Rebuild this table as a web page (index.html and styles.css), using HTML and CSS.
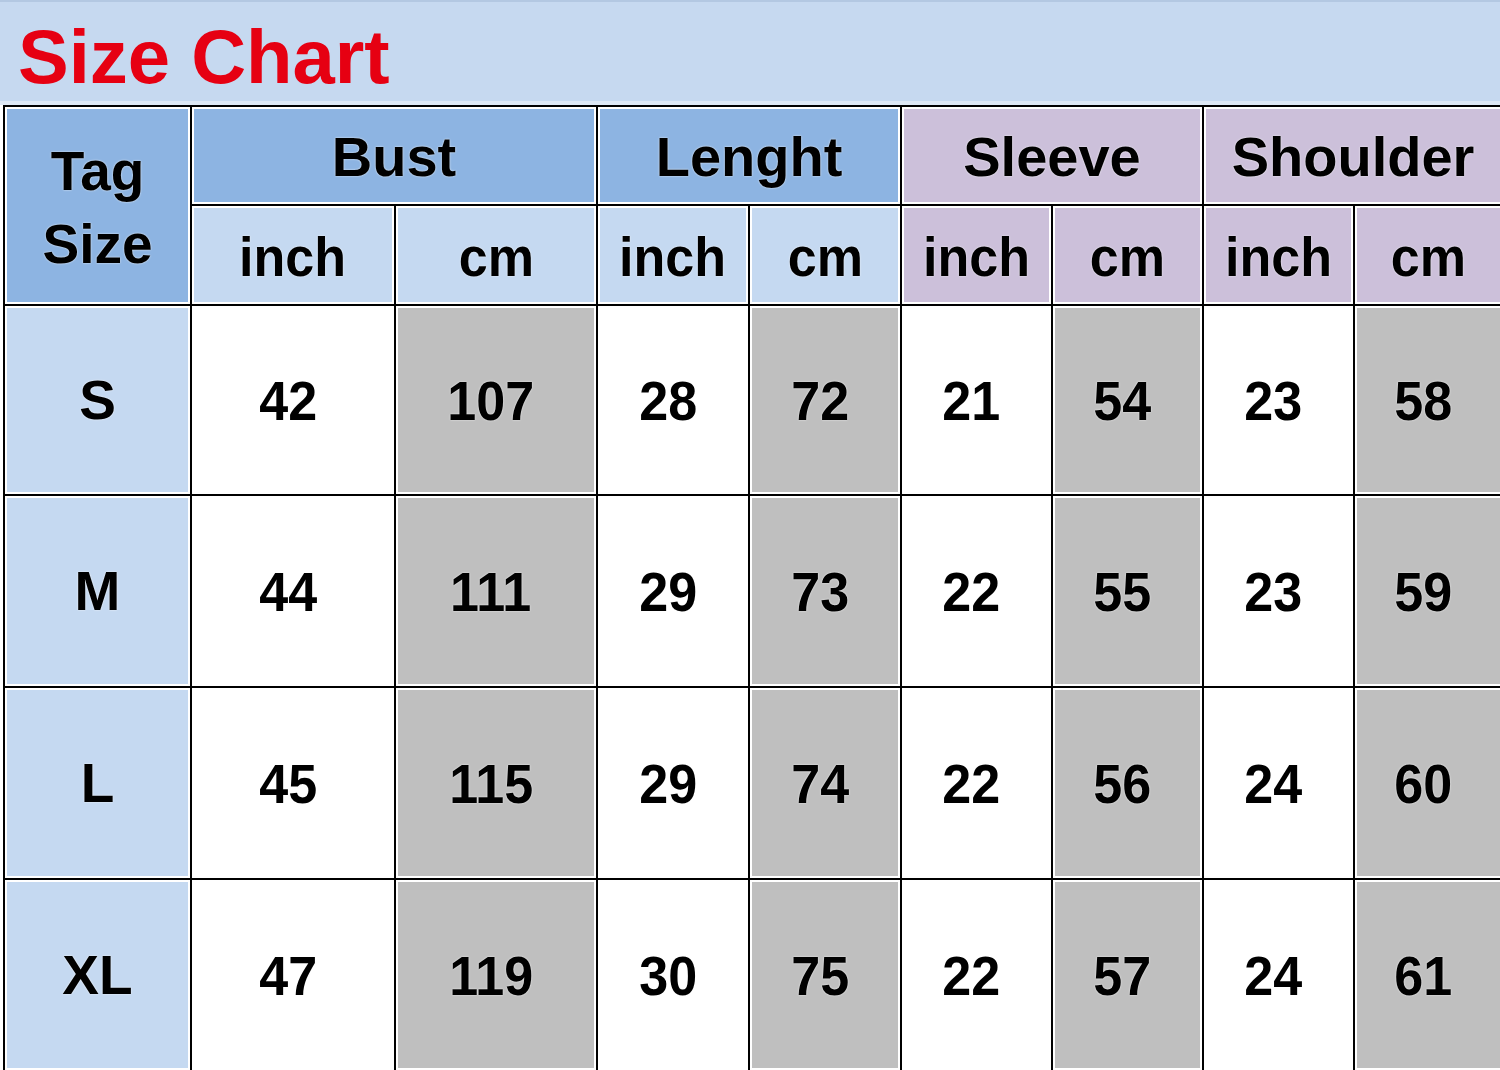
FILE: index.html
```html
<!DOCTYPE html>
<html lang="en">
<head>
<meta charset="utf-8">
<title>Size Chart</title>
<link rel="stylesheet" href="styles.css">
</head>
<body>
<div class="page">
  <header class="band">
    <h1 class="title">Size Chart</h1>
  </header>
  <div class="strip"></div>
  <div class="chart">
    <div class="cell tag-head"><span class="tag-text">Tag<br>Size</span></div>
    <div class="cell group blue span2"><span>Bust</span></div>
    <div class="cell group blue span2"><span>Lenght</span></div>
    <div class="cell group purple span2"><span>Sleeve</span></div>
    <div class="cell group purple span2"><span>Shoulder</span></div>

    <div class="cell sub light"><span>inch</span></div>
    <div class="cell sub light"><span>cm</span></div>
    <div class="cell sub light"><span>inch</span></div>
    <div class="cell sub light"><span>cm</span></div>
    <div class="cell sub lilac"><span>inch</span></div>
    <div class="cell sub lilac"><span>cm</span></div>
    <div class="cell sub lilac"><span>inch</span></div>
    <div class="cell sub lilac"><span>cm</span></div>

    <div class="cell size"><span>S</span></div>
    <div class="cell num white"><span>42</span></div>
    <div class="cell num gray"><span>107</span></div>
    <div class="cell num white"><span>28</span></div>
    <div class="cell num gray"><span>72</span></div>
    <div class="cell num white"><span>21</span></div>
    <div class="cell num gray"><span>54</span></div>
    <div class="cell num white"><span>23</span></div>
    <div class="cell num gray"><span>58</span></div>

    <div class="cell size"><span>M</span></div>
    <div class="cell num white"><span>44</span></div>
    <div class="cell num gray"><span>111</span></div>
    <div class="cell num white"><span>29</span></div>
    <div class="cell num gray"><span>73</span></div>
    <div class="cell num white"><span>22</span></div>
    <div class="cell num gray"><span>55</span></div>
    <div class="cell num white"><span>23</span></div>
    <div class="cell num gray"><span>59</span></div>

    <div class="cell size"><span>L</span></div>
    <div class="cell num white"><span>45</span></div>
    <div class="cell num gray"><span>115</span></div>
    <div class="cell num white"><span>29</span></div>
    <div class="cell num gray"><span>74</span></div>
    <div class="cell num white"><span>22</span></div>
    <div class="cell num gray"><span>56</span></div>
    <div class="cell num white"><span>24</span></div>
    <div class="cell num gray"><span>60</span></div>

    <div class="cell size"><span>XL</span></div>
    <div class="cell num white"><span>47</span></div>
    <div class="cell num gray"><span>119</span></div>
    <div class="cell num white"><span>30</span></div>
    <div class="cell num gray"><span>75</span></div>
    <div class="cell num white"><span>22</span></div>
    <div class="cell num gray"><span>57</span></div>
    <div class="cell num white"><span>24</span></div>
    <div class="cell num gray"><span>61</span></div>
  </div>
</div>
</body>
</html>
```

FILE: styles.css
```css
html, body {
  margin: 0;
  padding: 0;
  background: #ffffff;
  overflow: hidden;
}

.page {
  width: 1500px;
  height: 1070px;
  overflow: hidden;
  font-family: "Liberation Sans", Arial, sans-serif;
  color: #000;
}

.band {
  height: 101px;
  box-sizing: border-box;
  background: #c6d9f0;
  border-top: 2px solid #b3c8e2;
  padding: 17px 0 0 18px;
}

.title {
  margin: 0;
  font-size: 76px;
  line-height: 76px;
  font-weight: 700;
  color: #e60012;
  letter-spacing: 0;
}

.strip {
  height: 4px;
  background: #dde8f5;
}

.chart {
  display: grid;
  grid-template-columns: 185px 202px 200px 150px 150px 149px 149px 149px 147px;
  grid-template-rows: 97px 98px 188px 190px 190px 190px;
  gap: 2px;
  padding: 2px 0 0 2px;
  margin-left: 3px;
  background: #000;
  width: max-content;
}

.cell {
  display: flex;
  align-items: center;
  justify-content: center;
  font-weight: 700;
  box-shadow: inset 0 0 0 2px #fff;
  text-shadow: 0 0 2px rgba(255, 255, 255, 0.9);
}

.cell span {
  display: inline-block;
}

.span2 {
  grid-column: span 2;
}

.tag-head {
  grid-row: span 2;
  background: #8db4e2;
  padding-top: 5px;
}

.tag-text {
  font-size: 55px;
  line-height: 73px;
  text-align: center;
}

.group {
  font-size: 56px;
  line-height: 56px;
  padding-top: 2px;
}

.blue {
  background: #8db4e2;
}

.purple {
  background: #ccc0da;
}

.sub {
  font-size: 56px;
  line-height: 56px;
  padding-top: 4px;
}

.sub span,
.num span {
  transform: scaleX(0.93);
}

.light {
  background: #c5d9f1;
}

.lilac {
  background: #ccc0da;
}

.size {
  background: #c5d9f1;
  font-size: 55px;
  line-height: 56px;
}

.num {
  font-size: 56px;
  line-height: 56px;
  padding-right: 10px;
  padding-top: 2px;
}

.white {
  background: #ffffff;
}

.gray {
  background: #bfbfbf;
}
```
